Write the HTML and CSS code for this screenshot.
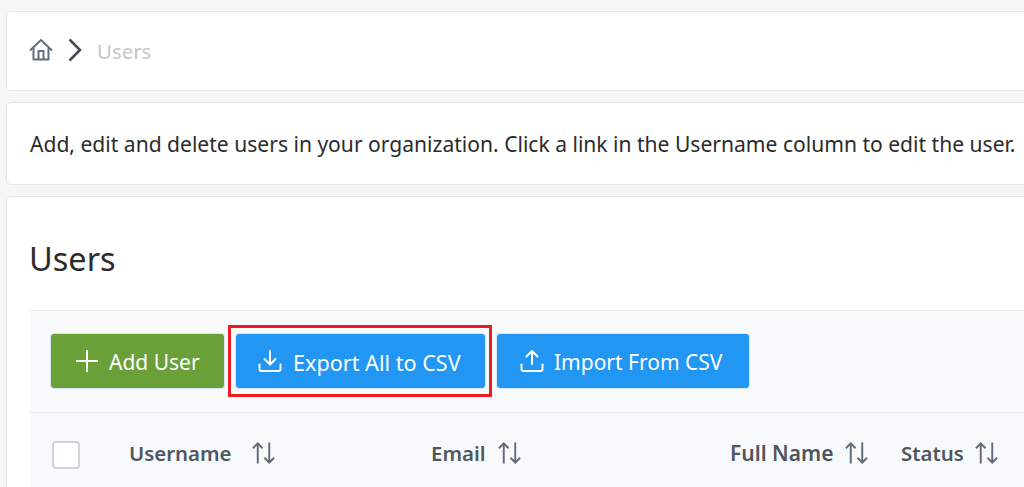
FILE: index.html
```html
<!DOCTYPE html>
<html lang="en">
<head>
<meta charset="utf-8">
<title>Users</title>
<link rel="stylesheet" href="styles.css">
</head>
<body>
<div class="page">
  <nav class="card crumbs">
    <svg class="home" viewBox="0 0 24 24" width="24" height="24" fill="none" stroke="#5f6f7f" stroke-width="2" stroke-linejoin="round"><path d="M1 12.500 12 2l11 10.500"/><path d="M4.500 10v11.500h15V10"/><path d="M9.500 21.500V13h5v8.500"/></svg>
    <svg class="chev" viewBox="0 0 14 24" width="14" height="24" fill="none" stroke="#454b54" stroke-width="2.600"><path d="M1.500 1.500 12 12 1.500 22.500"/></svg>
    <span class="crumb">Users</span>
  </nav>
  <section class="card intro">Add, edit and delete users in your organization. Click a link in the Username column to edit the user.</section>
  <main class="card users">
    <h1>Users</h1>
    <div class="toolbar">
      <button class="btn green"><svg viewBox="0 0 24 24" width="24" height="24" fill="none" stroke="#fff" stroke-width="2"><path d="M12 1v22M1 12h22"/></svg>Add User</button>
      <button class="btn blue export"><svg viewBox="0 0 24 24" width="24" height="24" fill="none" stroke="#fff" stroke-width="2" stroke-linecap="round" stroke-linejoin="round"><path d="M12 2v13M6.500 10l5.500 5.500 5.500-5.500"/><path d="M1.500 15.500v4.500a2 2 0 0 0 2 2h17a2 2 0 0 0 2-2v-4.500"/></svg>Export All to CSV</button>
      <button class="btn blue import"><svg viewBox="0 0 24 24" width="24" height="24" fill="none" stroke="#fff" stroke-width="2" stroke-linecap="round" stroke-linejoin="round"><path d="M12 15V2M6.500 7.500 12 2l5.500 5.500"/><path d="M1.500 15.500v4.500a2 2 0 0 0 2 2h17a2 2 0 0 0 2-2v-4.500"/></svg>Import From CSV</button>
      <div class="highlight"></div>
    </div>
    <div class="thead">
      <span class="check"></span>
      <span class="th th-user">Username<svg class="sort" viewBox="0 0 24 24" width="23" height="24" fill="none" stroke="#5f6b78" stroke-width="2"><path d="M6 23V2M1 7l5-5 5 5M18 1v21M13 17l5 5 5-5"/></svg></span>
      <span class="th th-email">Email<svg class="sort" viewBox="0 0 24 24" width="23" height="24" fill="none" stroke="#5f6b78" stroke-width="2"><path d="M6 23V2M1 7l5-5 5 5M18 1v21M13 17l5 5 5-5"/></svg></span>
      <span class="th th-name">Full Name<svg class="sort" viewBox="0 0 24 24" width="23" height="24" fill="none" stroke="#5f6b78" stroke-width="2"><path d="M6 23V2M1 7l5-5 5 5M18 1v21M13 17l5 5 5-5"/></svg></span>
      <span class="th th-status">Status<svg class="sort" viewBox="0 0 24 24" width="23" height="24" fill="none" stroke="#5f6b78" stroke-width="2"><path d="M6 23V2M1 7l5-5 5 5M18 1v21M13 17l5 5 5-5"/></svg></span>
    </div>
  </main>
</div>
</body>
</html>
```
FILE: styles.css
```css
html, body {
  margin: 0;
  height: 487px;
  width: 1024px;
  overflow: hidden;
  background: #f6f6f6;
}
body {
  font-family: "Noto Sans", "Open Sans", sans-serif;
  color: #2b2b2b;
}
.page {
  height: 487px;
  overflow: hidden;
  padding: 11px 0 0 6px;
  box-sizing: border-box;
  display: flex;
  flex-direction: column;
  gap: 11px;
}
.card {
  width: 1094px;
  flex: none;
  background: #fff;
  border: 1px solid #e8e8e8;
  border-radius: 5px;
  box-sizing: border-box;
}
.crumbs {
  height: 80px;
  display: flex;
  align-items: center;
  padding-left: 22px;
}
.home { margin-right: 15px; margin-top: -3px; }
.chev { margin-right: 15px; margin-top: -2px; }
.crumb {
  font-size: 20.400px;
  color: #c4c7ca;
}
.intro {
  height: 83px;
  display: flex;
  align-items: center;
  padding: 0 0 0 23px;
  font-size: 21.070px;
  white-space: nowrap;
}
.users {
  height: 320px;
  padding: 0 0 0 23px;
}
h1 {
  margin: 0 0 0 -1px;
  height: 113px;
  display: flex;
  align-items: center;
  padding-top: 10px;
  box-sizing: border-box;
  font-size: 32.500px;
  font-weight: 400;
  color: #2b2b2b;
}
.toolbar {
  position: relative;
  height: 103px;
  box-sizing: border-box;
  border-top: 1px solid #e8e8e8;
  border-bottom: 1px solid #e8e8e8;
  background: #f8f9fb;
  padding: 22px 0 0 20px;
  display: flex;
  align-items: flex-start;
  gap: 10px;
}
.btn {
  flex: none;
  height: 56px;
  box-sizing: border-box;
  border: 1px solid #d7e6f2;
  border-radius: 4px;
  display: flex;
  align-items: center;
  gap: 10px;
  padding: 2px 24px 0 22px;
  font: 400 21px "Noto Sans", "Open Sans", sans-serif;
  color: #fff;
  white-space: nowrap;
}
.btn svg { margin-top: -2px; }
.green { background: #6b9f38; padding-left: 24px; width: 175px; }
.blue { background: #2196f3; }
.export { font-size: 21.600px; width: 251px; gap: 11px; }
.import { padding-left: 23px; width: 254px; }
.highlight {
  position: absolute;
  left: 198px;
  top: 14px;
  width: 264px;
  height: 72px;
  box-sizing: border-box;
  border: 3px solid #ee1c25;
}
.thead {
  height: 80px;
  background: #f8f9fb;
  position: relative;
}
.check {
  position: absolute;
  left: 22px;
  top: 28px;
  width: 28px;
  height: 28px;
  box-sizing: border-box;
  background: #fff;
  border: 2px solid #cfd4da;
  border-radius: 4px;
}
.th {
  position: absolute;
  top: 26px;
  display: flex;
  align-items: center;
  font-size: 20.400px;
  font-weight: 600;
  color: #4f5660;
  white-space: nowrap;
}
.th-user { left: 99px; }
.th-email { left: 401px; }
.th-name { left: 700px; font-size: 21px; }
.th-status { left: 871px; }
.sort { margin-left: 11px; }
.th-user .sort { margin-left: 20px; }
.th-email .sort { margin-left: 13px; }
.th-name .sort { margin-left: 12px; }
```
